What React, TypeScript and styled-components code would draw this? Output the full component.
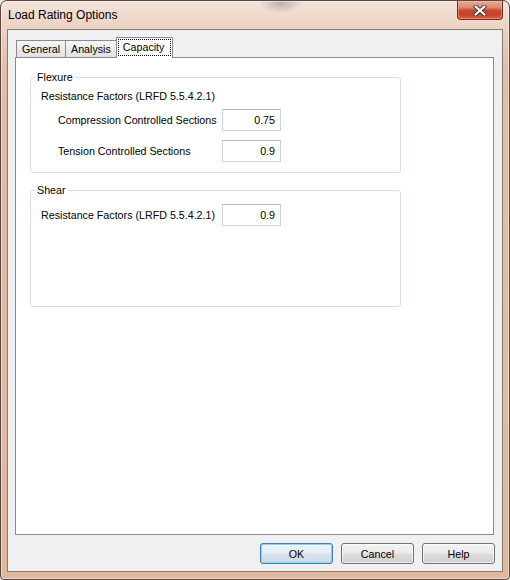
import React from 'react';
import styled, { createGlobalStyle } from 'styled-components';

const UI_FONT = `"Liberation Sans", Arial, sans-serif`;

const GlobalStyle = createGlobalStyle`
  html, body { margin: 0; padding: 0; background: #efe6e0; }
  body { width: 510px; height: 580px; overflow: hidden; }
  *, *::before, *::after { box-sizing: border-box; }
`;

const Window = styled.div`
  width: 510px;
  height: 580px;
  display: flex;
  flex-direction: column;
  border: 1px solid #5a4840;
  border-radius: 7px 7px 4px 4px;
  background:
    radial-gradient(ellipse 22px 10px at 280px 2px, rgba(90, 80, 90, 0.35), rgba(90, 80, 90, 0) 100%),
    linear-gradient(180deg, #f3e4da 0px, #ecd3c3 26px, #e2bea7 70px, #dfb89e 100%);
  padding: 0 6px 7px 6px;
  font-family: ${UI_FONT};
  box-shadow: inset 0 0 0 1px rgba(255, 255, 255, 0.45);
`;

const TitleBar = styled.div`
  height: 28px;
  display: flex;
  align-items: flex-start;
`;

const TitleText = styled.div`
  margin: 6px 0 0 1px;
  font-size: 12px;
  line-height: 16px;
  color: #000;
`;

const CloseButton = styled.div`
  margin-left: auto;
  width: 46px;
  height: 19px;
  display: flex;
  align-items: center;
  justify-content: center;
  border: 1px solid #6e2c20;
  border-top: none;
  border-radius: 0 0 4px 4px;
  background: linear-gradient(180deg, #e9a897 0%, #dc8a74 35%, #c54a30 52%, #c74327 75%, #e0603e 100%);
  box-shadow: inset 0 0 0 1px rgba(255, 200, 180, 0.45);
`;

const Client = styled.div`
  flex: 1;
  display: flex;
  flex-direction: column;
  border: 1px solid #837a74;
  background: #f0f0f0;
  padding: 7px 7px 7px 7px;
`;

const TabControl = styled.div`
  flex: 1;
  display: flex;
  flex-direction: column;
  margin-right: 1px;
`;

const TabStrip = styled.div`
  height: 20px;
  display: flex;
  align-items: flex-end;
  padding-left: 1px;
`;

const Tab = styled.div<{ $active?: boolean }>`
  display: flex;
  align-items: flex-start;
  border: 1px solid #898c95;
  border-bottom: none;
  font-size: 10.7px;
  color: #000;
  white-space: nowrap;
  ${(p) =>
    p.$active
      ? `
    height: 21px;
    margin-bottom: -1px;
    padding: 1px 1px 0 1px;
    background: #fff;
    position: relative;
    z-index: 1;
  `
      : `
    height: 17px;
    padding: 0 5px;
    line-height: 16px;
    background: linear-gradient(180deg, #f6f6f6 0%, #ebebeb 50%, #e2e2e2 100%);
    & + & { margin-left: -1px; }
  `}
`;

const FocusLabel = styled.span`
  display: block;
  height: 17px;
  line-height: 14px;
  padding: 0 6px 0 4px;
  border: 1px dotted #000;
`;

const Panel = styled.div`
  flex: 1;
  border: 1px solid #898c95;
  background: #fff;
  padding: 12px 0 0 14px;
`;

const GroupBox = styled.fieldset<{ $height?: number }>`
  margin: 0;
  width: 371px;
  min-width: 0;
  border: 1px solid #d5dfe5;
  border-radius: 3px;
  padding: ${(p) => (p.$height ? '7px 10px 0 10px' : '5px 10px 10px 10px')};
  ${(p) => (p.$height ? `height: ${p.$height}px;` : '')}
  & + & { margin-top: 10px; }
`;

const GroupTitle = styled.legend`
  padding: 0 2px;
  margin-left: -6px;
  font-size: 10.7px;
  line-height: 14px;
  color: #000;
`;

const Heading = styled.div`
  font-size: 10.7px;
  line-height: 14px;
  color: #000;
  margin-bottom: 6px;
`;

const FieldRow = styled.div`
  display: grid;
  grid-template-columns: 181px 59px;
  align-items: center;
  height: 22px;
  & + & { margin-top: 9px; }
`;

const FieldLabel = styled.span<{ $indent?: boolean }>`
  padding-left: ${(p) => (p.$indent ? '17px' : '0')};
  font-size: 10.7px;
  color: #000;
  white-space: nowrap;
`;

const ValueBox = styled.input`
  width: 59px;
  height: 22px;
  margin: 0;
  border: 1px solid #d0d4da;
  border-top-color: #b4b7bd;
  padding: 0 5px;
  text-align: right;
  font-family: ${UI_FONT};
  font-size: 10.7px;
  color: #000;
  background: #fff;
  outline: none;
`;

const ButtonRow = styled.div`
  display: flex;
  justify-content: flex-end;
  gap: 8px;
  margin-top: 8px;
`;

const DialogButton = styled.button<{ $default?: boolean }>`
  width: 73px;
  height: 21px;
  padding: 0;
  border-radius: 3px;
  font-family: ${UI_FONT};
  font-size: 10.7px;
  color: #000;
  ${(p) =>
    p.$default
      ? `
    border: 1px solid #3c7fb1;
    background: linear-gradient(180deg, #eef5fa 0%, #e3edf4 48%, #d6e3ec 52%, #cddbe6 100%);
    box-shadow: inset 0 0 0 1px #8fd3f3;
  `
      : `
    border: 1px solid #707070;
    background: linear-gradient(180deg, #f2f2f2 0%, #ebebeb 48%, #dddddd 52%, #cfcfcf 100%);
    box-shadow: inset 0 0 0 1px rgba(255, 255, 255, 0.7);
  `}
`;

const CloseGlyph = () => (
  <svg width="14" height="11" viewBox="0 0 14 11">
    <path d="M2.5 1.5 L11.5 9.5 M11.5 1.5 L2.5 9.5" stroke="#3b3b3b" strokeWidth="4" strokeLinecap="round" />
    <path d="M2.5 1.5 L11.5 9.5 M11.5 1.5 L2.5 9.5" stroke="#ffffff" strokeWidth="2.2" strokeLinecap="round" />
  </svg>
);

export default function App() {
  return (
    <>
      <GlobalStyle />
      <Window>
        <TitleBar>
          <TitleText>Load Rating Options</TitleText>
          <CloseButton>
            <CloseGlyph />
          </CloseButton>
        </TitleBar>
        <Client>
          <TabControl>
            <TabStrip>
              <Tab>General</Tab>
              <Tab>Analysis</Tab>
              <Tab $active>
                <FocusLabel>Capacity</FocusLabel>
              </Tab>
            </TabStrip>
            <Panel>
              <GroupBox>
                <GroupTitle>Flexure</GroupTitle>
                <Heading>Resistance Factors (LRFD 5.5.4.2.1)</Heading>
                <FieldRow>
                  <FieldLabel $indent>Compression Controlled Sections</FieldLabel>
                  <ValueBox readOnly defaultValue="0.75" />
                </FieldRow>
                <FieldRow>
                  <FieldLabel $indent>Tension Controlled Sections</FieldLabel>
                  <ValueBox readOnly defaultValue="0.9" />
                </FieldRow>
              </GroupBox>
              <GroupBox $height={124}>
                <GroupTitle>Shear</GroupTitle>
                <FieldRow>
                  <FieldLabel>Resistance Factors (LRFD 5.5.4.2.1)</FieldLabel>
                  <ValueBox readOnly defaultValue="0.9" />
                </FieldRow>
              </GroupBox>
            </Panel>
          </TabControl>
          <ButtonRow>
            <DialogButton $default>OK</DialogButton>
            <DialogButton>Cancel</DialogButton>
            <DialogButton>Help</DialogButton>
          </ButtonRow>
        </Client>
      </Window>
    </>
  );
}
